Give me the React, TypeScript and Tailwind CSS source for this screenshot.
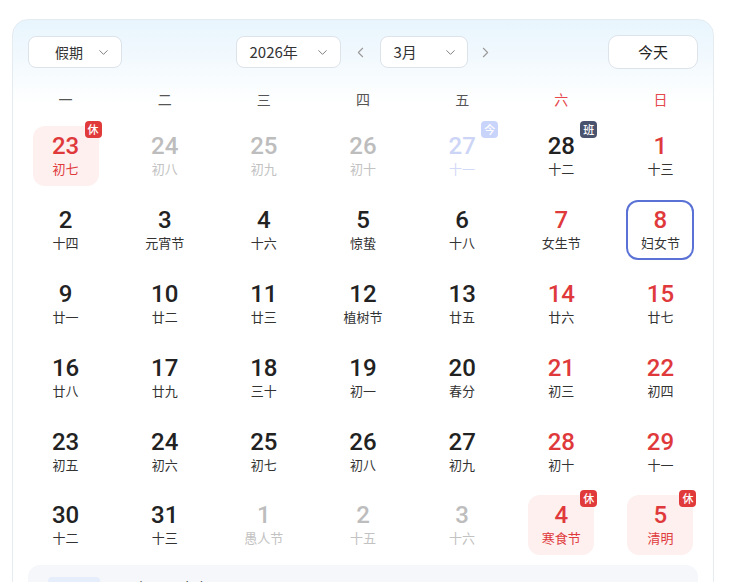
import React from 'react';
import { ChevronDown, ChevronLeft, ChevronRight } from 'lucide-react';

type Day = {
    n: number;
    lunar: string;
    tone: 'normal' | 'red' | 'muted' | 'today';
    lunarTone?: 'normal' | 'red' | 'muted' | 'today';
    badge?: '休' | '班' | '今';
    rest?: boolean;
    selected?: boolean;
};

const weekdays = ['一', '二', '三', '四', '五', '六', '日'];

const days: Day[] = [
    { n: 23, lunar: '初七', tone: 'red', lunarTone: 'red', badge: '休', rest: true },
    { n: 24, lunar: '初八', tone: 'muted' },
    { n: 25, lunar: '初九', tone: 'muted' },
    { n: 26, lunar: '初十', tone: 'muted' },
    { n: 27, lunar: '十一', tone: 'today', badge: '今' },
    { n: 28, lunar: '十二', tone: 'normal', badge: '班' },
    { n: 1, lunar: '十三', tone: 'red', lunarTone: 'normal' },
    { n: 2, lunar: '十四', tone: 'normal' },
    { n: 3, lunar: '元宵节', tone: 'normal' },
    { n: 4, lunar: '十六', tone: 'normal' },
    { n: 5, lunar: '惊蛰', tone: 'normal' },
    { n: 6, lunar: '十八', tone: 'normal' },
    { n: 7, lunar: '女生节', tone: 'red', lunarTone: 'normal' },
    { n: 8, lunar: '妇女节', tone: 'red', lunarTone: 'normal', selected: true },
    { n: 9, lunar: '廿一', tone: 'normal' },
    { n: 10, lunar: '廿二', tone: 'normal' },
    { n: 11, lunar: '廿三', tone: 'normal' },
    { n: 12, lunar: '植树节', tone: 'normal' },
    { n: 13, lunar: '廿五', tone: 'normal' },
    { n: 14, lunar: '廿六', tone: 'red', lunarTone: 'normal' },
    { n: 15, lunar: '廿七', tone: 'red', lunarTone: 'normal' },
    { n: 16, lunar: '廿八', tone: 'normal' },
    { n: 17, lunar: '廿九', tone: 'normal' },
    { n: 18, lunar: '三十', tone: 'normal' },
    { n: 19, lunar: '初一', tone: 'normal' },
    { n: 20, lunar: '春分', tone: 'normal' },
    { n: 21, lunar: '初三', tone: 'red', lunarTone: 'normal' },
    { n: 22, lunar: '初四', tone: 'red', lunarTone: 'normal' },
    { n: 23, lunar: '初五', tone: 'normal' },
    { n: 24, lunar: '初六', tone: 'normal' },
    { n: 25, lunar: '初七', tone: 'normal' },
    { n: 26, lunar: '初八', tone: 'normal' },
    { n: 27, lunar: '初九', tone: 'normal' },
    { n: 28, lunar: '初十', tone: 'red', lunarTone: 'normal' },
    { n: 29, lunar: '十一', tone: 'red', lunarTone: 'normal' },
    { n: 30, lunar: '十二', tone: 'normal' },
    { n: 31, lunar: '十三', tone: 'normal' },
    { n: 1, lunar: '愚人节', tone: 'muted' },
    { n: 2, lunar: '十五', tone: 'muted' },
    { n: 3, lunar: '十六', tone: 'muted' },
    { n: 4, lunar: '寒食节', tone: 'red', lunarTone: 'red', badge: '休', rest: true },
    { n: 5, lunar: '清明', tone: 'red', lunarTone: 'red', badge: '休', rest: true },
];

const numColor = {
    normal: 'text-[#222222]',
    red: 'text-[#e0393b]',
    muted: 'text-[#bdbdbd]',
    today: 'text-[#cdd5f7]',
};

const lunarColor = {
    normal: 'text-[#333333]',
    red: 'text-[#e0393b]',
    muted: 'text-[#c2c2c2]',
    today: 'text-[#d3daf7]',
};

const badgeStyle = {
    '休': 'bg-[#e03a3a]',
    '班': 'bg-[#4a536e]',
    '今': 'bg-[#c9d4fb]',
};

const DayCell: React.FC<{ day: Day }> = ({ day }) => {
    const lunarTone = day.lunarTone ?? day.tone;
    return (
        <div className="flex items-center justify-center">
            <div
                className={`relative w-[66px] h-[60px] rounded-xl flex flex-col items-center justify-center ${day.rest ? 'bg-[#fdf0ef]' : ''} ${day.selected ? 'border-2 border-[#5a72d6] h-[59px] w-[68px]' : ''}`}
            >
                <div className={`font-['Roboto',sans-serif] font-medium text-[24px] leading-[26px] ${numColor[day.tone]}`}>{day.n}</div>
                <div className={`font-['Noto_Sans_CJK_SC',sans-serif] text-[13px] leading-[19px] ${lunarColor[lunarTone]}`}>{day.lunar}</div>
                {day.badge && (
                    <span className={`absolute -top-[5px] -right-[3px] w-[17px] h-[17px] rounded-[4px] text-white text-[11px] leading-[17px] text-center font-['Noto_Sans_CJK_SC',sans-serif] font-medium ${badgeStyle[day.badge]}`}>
                        {day.badge}
                    </span>
                )}
            </div>
        </div>
    );
};

const App: React.FC = () => {
    return (
        <div className="w-[733px] h-[582px] overflow-hidden bg-white pt-[19px] pl-[12px] font-['Noto_Sans_CJK_SC',sans-serif]">
            <div className="w-[702px] h-[600px] rounded-2xl border border-[#e4ecf2] bg-[linear-gradient(180deg,#e8f5fd_0px,#f4fafe_45px,#ffffff_85px)]">
                {/* header controls */}
                <div className="grid grid-cols-[1fr_auto_1fr] items-center px-[15px] pt-[15px]">
                    <div>
                        <button className="w-[94px] h-[32px] rounded-lg border border-[#dde3ea] bg-white flex items-center justify-between pl-[26px] pr-[10px] text-[14px] text-[#333]">
                            <span>假期</span>
                            <ChevronDown size={15} strokeWidth={1.5} className="text-[#777]" />
                        </button>
                    </div>
                    <div className="flex items-center pl-[12px]">
                        <button className="w-[105px] h-[32px] rounded-lg border border-[#dde3ea] bg-white flex items-center justify-between pl-[13px] pr-[10px] text-[15px] text-[#333]">
                            <span>2026年</span>
                            <ChevronDown size={15} strokeWidth={1.5} className="text-[#777]" />
                        </button>
                        <ChevronLeft size={17} strokeWidth={1.5} className="text-[#999] mx-[11px]" />
                        <button className="w-[88px] h-[32px] rounded-lg border border-[#dde3ea] bg-white flex items-center justify-between pl-[13px] pr-[9px] text-[15px] text-[#333]">
                            <span>3月</span>
                            <ChevronDown size={15} strokeWidth={1.5} className="text-[#777]" />
                        </button>
                        <ChevronRight size={17} strokeWidth={1.5} className="text-[#999] mx-[9px]" />
                    </div>
                    <div className="flex justify-end">
                        <button className="w-[90px] h-[34px] rounded-[10px] border border-[#dde3ea] bg-white text-[15px] text-[#222]">
                            今天
                        </button>
                    </div>
                </div>

                {/* weekdays */}
                <div className="grid grid-cols-7 px-[3px] mt-[13px] h-[35px] items-center">
                    {weekdays.map((w, i) => (
                        <div key={w} className={`text-center text-[14px] ${i >= 5 ? 'text-[#e5484d]' : 'text-[#555]'}`}>{w}</div>
                    ))}
                </div>

                {/* days */}
                <div className="grid grid-cols-7 auto-rows-[73.8px] px-[3px] mt-[2px]">
                    {days.map((d, i) => (
                        <DayCell key={i} day={d} />
                    ))}
                </div>

                {/* info panel */}
                <div className="mx-[15px] mt-[3px] rounded-xl bg-[#f6f7fb] h-[80px] px-[20px] pt-[12px] flex items-start gap-[10px]">
                    <span className="w-[52px] h-[20px] rounded bg-[#e6eefc]"></span>
                    <span className="text-[14px] text-[#333] leading-[20px]">二月初八 丙午年</span>
                </div>
            </div>
        </div>
    );
};

export default App;
